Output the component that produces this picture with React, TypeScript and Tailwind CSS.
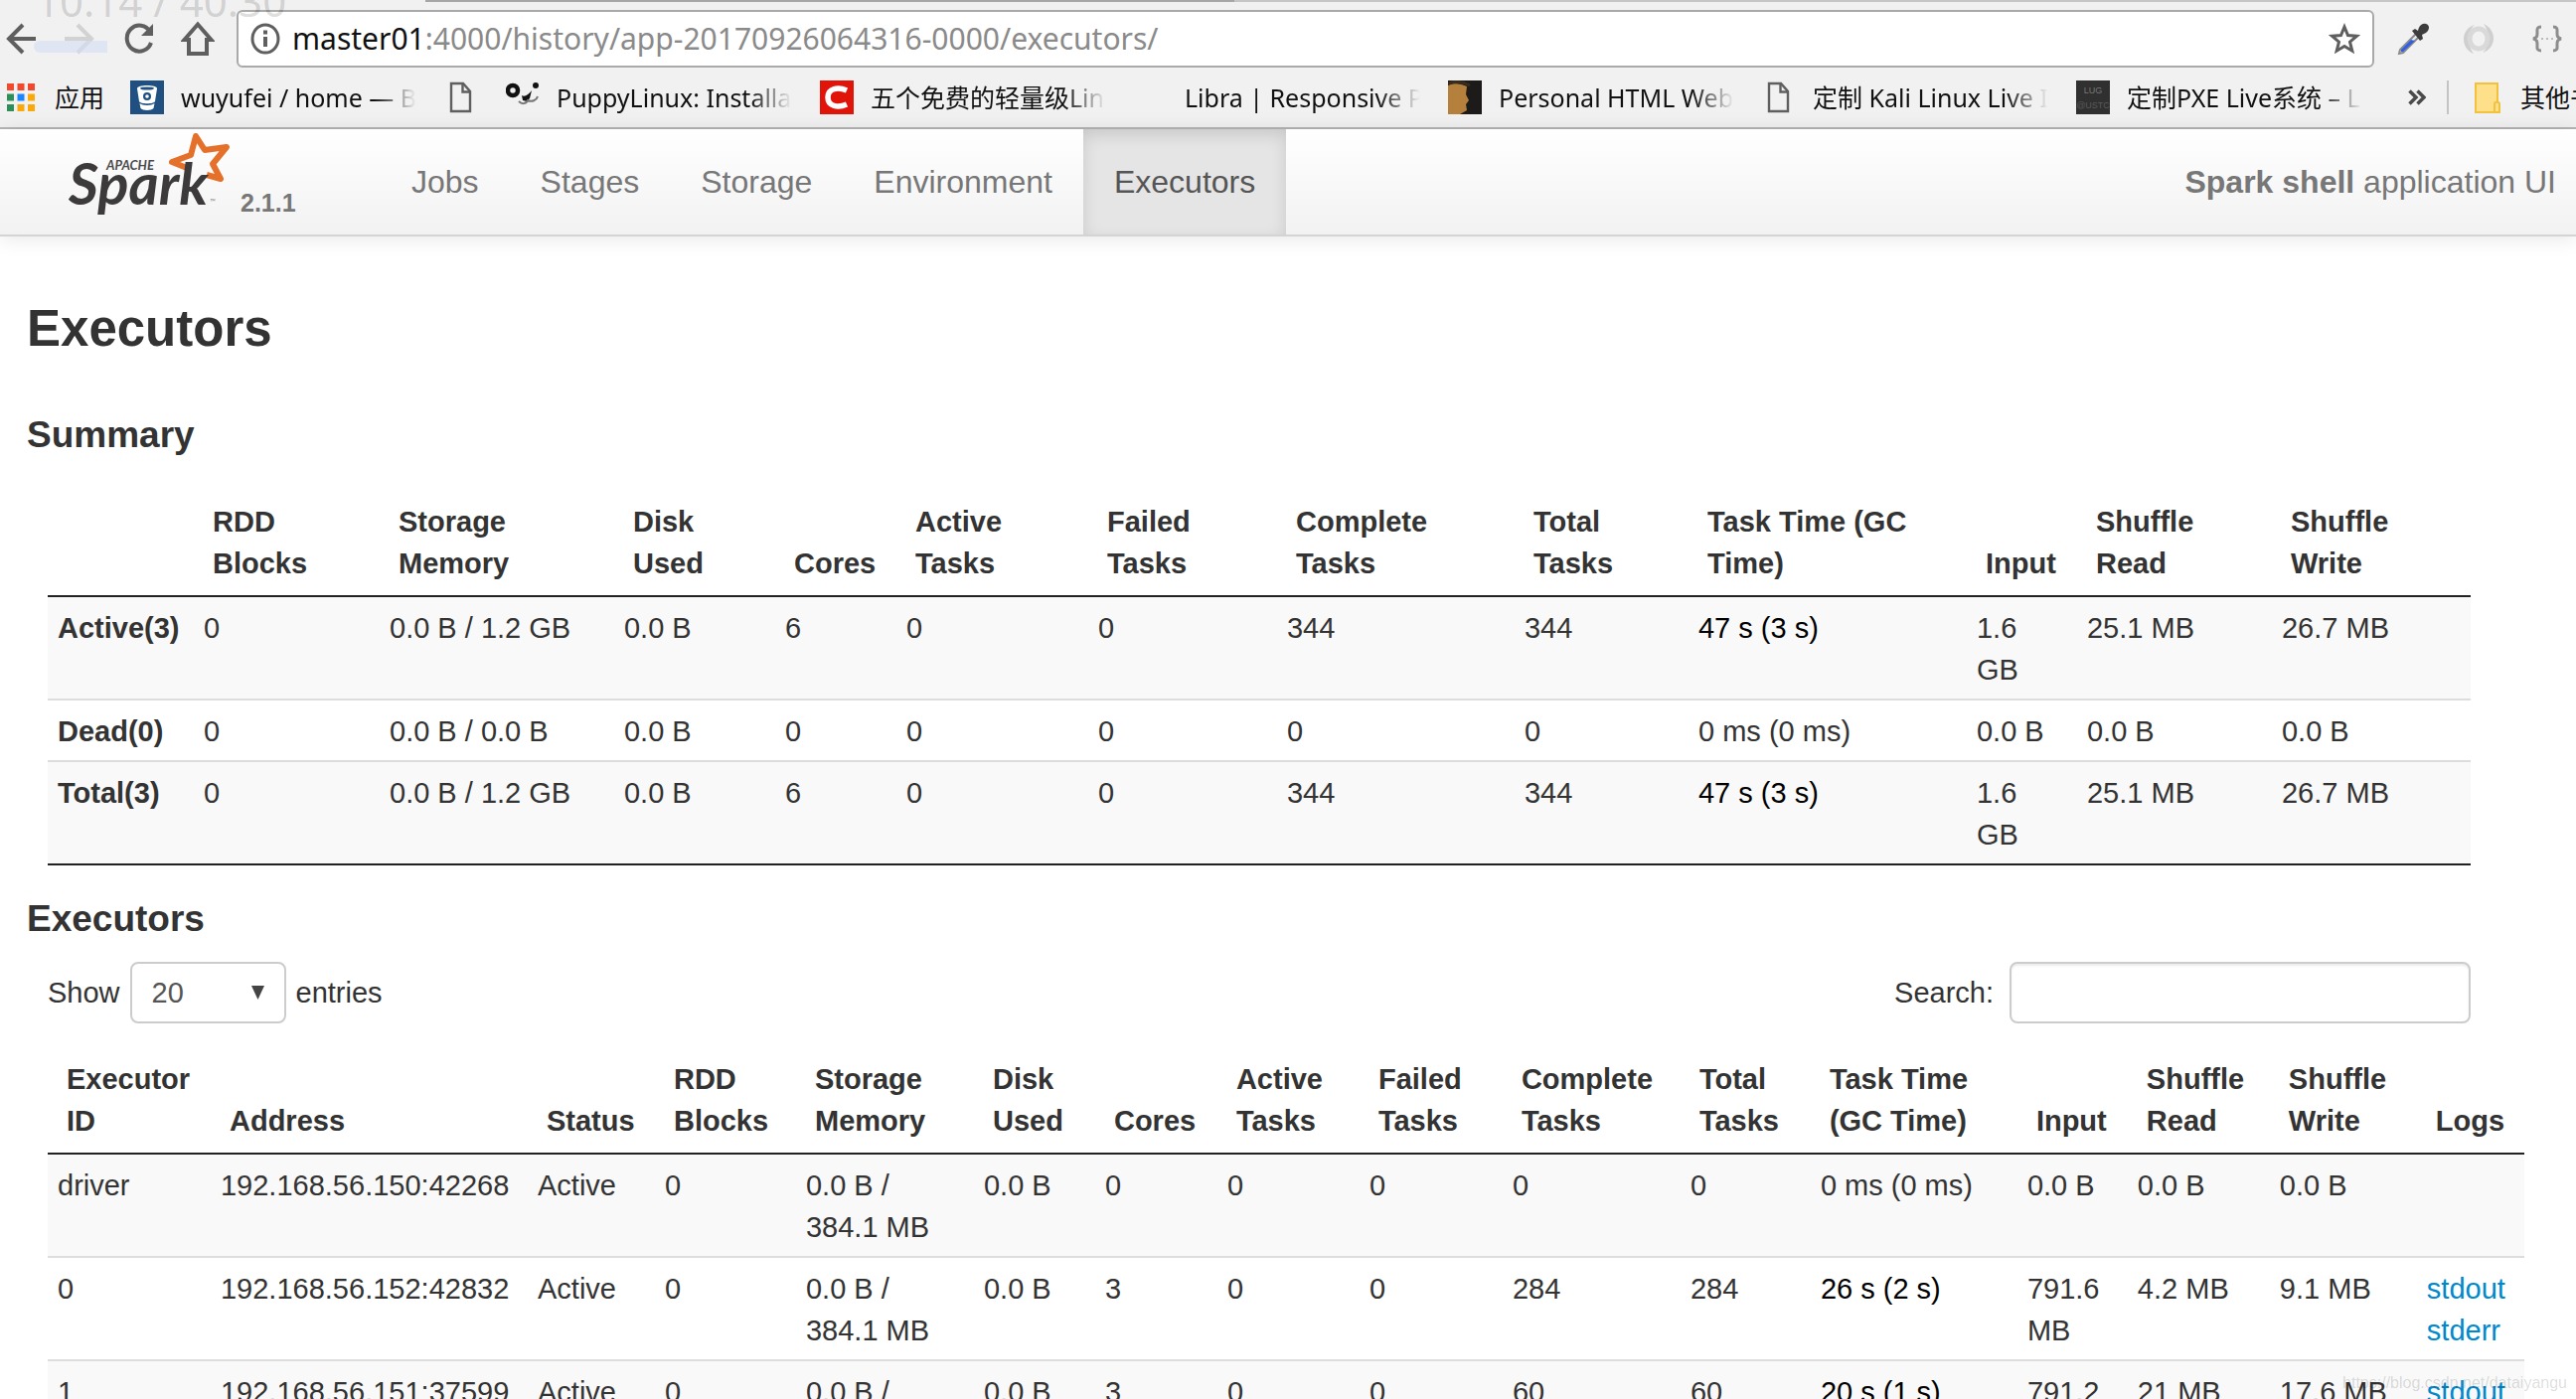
import React from 'react';

type Column = { label: string; width: number };
type Row = string[];

const summaryColumns: Column[] = [
  { label: '', width: 147 },
  { label: 'RDD\nBlocks', width: 187 },
  { label: 'Storage\nMemory', width: 236 },
  { label: 'Disk\nUsed', width: 162 },
  { label: 'Cores', width: 122 },
  { label: 'Active\nTasks', width: 193 },
  { label: 'Failed\nTasks', width: 190 },
  { label: 'Complete\nTasks', width: 239 },
  { label: 'Total\nTasks', width: 175 },
  { label: 'Task Time (GC\nTime)', width: 280 },
  { label: 'Input', width: 111 },
  { label: 'Shuffle\nRead', width: 196 },
  { label: 'Shuffle\nWrite', width: 200 },
];

const summaryRows: Row[] = [
  ['Active(3)', '0', '0.0 B / 1.2 GB', '0.0 B', '6', '0', '0', '344', '344', '47 s (3 s)', '1.6\nGB', '25.1 MB', '26.7 MB'],
  ['Dead(0)', '0', '0.0 B / 0.0 B', '0.0 B', '0', '0', '0', '0', '0', '0 ms (0 ms)', '0.0 B', '0.0 B', '0.0 B'],
  ['Total(3)', '0', '0.0 B / 1.2 GB', '0.0 B', '6', '0', '0', '344', '344', '47 s (3 s)', '1.6\nGB', '25.1 MB', '26.7 MB'],
];

const executorColumns: Column[] = [
  { label: 'Executor\nID', width: 164 },
  { label: 'Address', width: 319 },
  { label: 'Status', width: 128 },
  { label: 'RDD\nBlocks', width: 142 },
  { label: 'Storage\nMemory', width: 179 },
  { label: 'Disk\nUsed', width: 122 },
  { label: 'Cores', width: 123 },
  { label: 'Active\nTasks', width: 143 },
  { label: 'Failed\nTasks', width: 144 },
  { label: 'Complete\nTasks', width: 179 },
  { label: 'Total\nTasks', width: 131 },
  { label: 'Task Time\n(GC Time)', width: 208 },
  { label: 'Input', width: 111 },
  { label: 'Shuffle\nRead', width: 143 },
  { label: 'Shuffle\nWrite', width: 148 },
  { label: 'Logs', width: 108 },
];

const executorRows: Row[] = [
  ['driver', '192.168.56.150:42268', 'Active', '0', '0.0 B /\n384.1 MB', '0.0 B', '0', '0', '0', '0', '0', '0 ms (0 ms)', '0.0 B', '0.0 B', '0.0 B', ''],
  ['0', '192.168.56.152:42832', 'Active', '0', '0.0 B /\n384.1 MB', '0.0 B', '3', '0', '0', '284', '284', '26 s (2 s)', '791.6\nMB', '4.2 MB', '9.1 MB', 'logs'],
  ['1', '192.168.56.151:37599', 'Active', '0', '0.0 B /\n384.1 MB', '0.0 B', '3', '0', '0', '60', '60', '20 s (1 s)', '791.2\nMB', '21 MB', '17.6 MB', 'logs'],
];

const navItems = ['Jobs', 'Stages', 'Storage', 'Environment', 'Executors'];

const PageIcon = () => (
  <svg width="34" height="34" viewBox="0 0 34 34" fill="none" stroke="#5f5f5f" strokeWidth="2.4">
    <path d="M7 3h12l7 8v20H7z" />
    <path d="M18.500 3v8.500H26" />
  </svg>
);

const BitbucketIcon = () => (
  <svg width="34" height="34" viewBox="0 0 34 34">
    <rect width="34" height="34" fill="#205081" />
    <path d="M7 8c0-4 20-4 20 0l-2 13c-1 3-15 3-16 0z" fill="#fff" />
    <ellipse cx="17" cy="8" rx="7" ry="1.600" fill="#205081" />
    <circle cx="17" cy="16" r="4" fill="#205081" />
    <circle cx="17" cy="16" r="1.800" fill="#fff" />
    <path d="M9.500 23c3 2.500 12 2.500 15 0l-1 5c-2 2.500-11 2.500-13 0z" fill="#fff" />
  </svg>
);

const PuppyIcon = () => (
  <svg width="34" height="34" viewBox="0 0 34 34">
    <circle cx="7" cy="10" r="5" fill="none" stroke="#111" strokeWidth="4.500" />
    <circle cx="30" cy="5" r="3" fill="#111" />
    <path d="M16 15c3 2 7-1 10-5l-2 8-3 3-4-1z" fill="#111" />
    <path d="M13 21c3 3 7 3 9-1 4 2 9 0 10-4" fill="none" stroke="#777" strokeWidth="2" />
  </svg>
);

const RedCIcon = () => (
  <svg width="34" height="34" viewBox="0 0 34 34">
    <rect width="34" height="34" fill="#e1140a" />
    <path d="M27 10c-9-4-19-2-19 7s10 11 19 7" fill="none" stroke="#fff" strokeWidth="5.500" />
  </svg>
);

const PortraitIcon = () => (
  <svg width="34" height="34" viewBox="0 0 34 34">
    <rect width="34" height="34" fill="#1c1b1a" />
    <path d="M0 5c6-3 13-2 19 1l-1 8 3 6-3 4 1 6-7 4H0z" fill="#b5803c" />
    <path d="M0 3c8-3 16-1 22 2" fill="none" stroke="#3a2c1c" strokeWidth="3" />
  </svg>
);

const LugIcon = () => (
  <svg width="34" height="34" viewBox="0 0 34 34" fontFamily="Liberation Sans" fontSize="9" textAnchor="middle" fill="#777">
    <rect width="34" height="34" fill="#303030" />
    <text x="17" y="13">LUG</text>
    <text x="17" y="28" fill="#595959">@USTC</text>
  </svg>
);

const FolderIcon = () => (
  <svg width="28" height="34" viewBox="0 0 28 34" fill="#ffe08a" stroke="#f2c13e" strokeWidth="2">
    <path d="M2 3h22v29H2z" />
    <path d="M21 24c0-3 5-3 5 0v8h-5z" />
  </svg>
);

const AppsIcon = () => (
  <svg width="28" height="28" viewBox="0 0 28 28">
    <path d="M0 0h7v7H0zM10.500 0h7v7h-7zM21 0h7v7h-7z" fill="#f4482e" />
    <path d="M0 10.500h7v7H0zM0 21h7v7H0z" fill="#2b8f57" />
    <path d="M10.500 10.500h7v7h-7z" fill="#1a85ff" />
    <path d="M21 10.500h7v7h-7zM10.500 21h7v7h-7zM21 21h7v7h-7z" fill="#fba90a" />
  </svg>
);

const bookmarks: { label: string; icon: React.ReactNode }[] = [
  { label: 'wuyufei / home — Bitbucket', icon: <BitbucketIcon /> },
  { label: '', icon: <PageIcon /> },
  { label: 'PuppyLinux: Installation', icon: <PuppyIcon /> },
  { label: '五个免费的轻量级Linux', icon: <RedCIcon /> },
  { label: 'Libra | Responsive Portfolio', icon: null },
  { label: 'Personal HTML Website', icon: <PortraitIcon /> },
  { label: '定制 Kali Linux Live ISO', icon: <PageIcon /> },
  { label: '定制PXE Live系统 – LUG', icon: <LugIcon /> },
];

const Toolbar = () => (
  <div className="flex items-center pt-2 pl-[6px] pr-[14px] text-[#5f5f5f]">
    <button aria-label="Back" className="mr-[29px]">
      <svg width="30" height="32" viewBox="0 0 30 32" fill="none" stroke="currentColor" strokeWidth="4">
        <path d="M30 16H3M17 2L3 16l14 14" />
      </svg>
    </button>
    <button aria-label="Forward" className="mr-[29px] text-[#d2d2d2]">
      <svg width="30" height="32" viewBox="0 0 30 32" fill="none" stroke="currentColor" strokeWidth="4">
        <path d="M0 16h27M13 2l14 14-14 14" />
      </svg>
    </button>
    <button aria-label="Reload" className="mr-[26px]">
      <svg width="32" height="32" viewBox="0 0 32 32" fill="none" stroke="currentColor" strokeWidth="4">
        <path d="M27 9A12.500 13 0 1 0 28 20" />
        <path d="M30 1v12H18z" fill="currentColor" stroke="none" />
      </svg>
    </button>
    <button aria-label="Home" className="mr-[22px]">
      <svg width="34" height="36" viewBox="0 0 34 36" fill="none" stroke="currentColor" strokeWidth="4">
        <path d="M17 3.500L3.500 19H8v14h18V19h4.500z" />
      </svg>
    </button>

    <div className="flex h-[58px] flex-1 items-center rounded-md border-2 border-[#a9a9a9] bg-white pr-[12px] pl-[12px]">
      <svg className="mr-[12px]" width="30" height="32" viewBox="0 0 30 32" fill="none" stroke="currentColor" strokeWidth="3">
        <ellipse cx="15" cy="16" rx="13" ry="14" />
        <path d="M15 14v10M15 7.500v4" strokeWidth="4" />
      </svg>
      <div className="flex-1 font-['Noto_Sans','Noto_Sans_CJK_SC',sans-serif] text-[30px] leading-[42px] text-[#8a8a8a]">
        <span className="text-[#111]">master01</span>:4000/history/app-20170926064316-0000/executors/
      </div>
      <button aria-label="Bookmark this page">
        <svg width="32" height="32" viewBox="0 0 32 32" fill="none" stroke="currentColor" strokeWidth="3">
          <path d="M16 4l3.500 8.500 9 .7-7 6 2.300 9L16 23.500 8.200 28.200l2.300-9-7-6 9-.7z" />
        </svg>
      </button>
    </div>

    <button aria-label="Color picker" className="ml-[22px]">
      <svg width="34" height="34" viewBox="0 0 34 34">
        <path d="M20 12L4 28l-1 4 4-1 16-16" fill="#e8ecf5" stroke="#8a8a8a" strokeWidth="2" />
        <path d="M15 18L5 28v2h2l12-11z" fill="#2f5fe0" />
        <path d="M16 9l3-2 3 2c1-5 4-8 8-7 4 1 4 6 0 9l-4 2 1 4-3 2z" fill="#3d3d3d" />
      </svg>
    </button>
    <button aria-label="Extension" className="ml-[32px]">
      <svg width="34" height="34" viewBox="0 0 34 34" fill="none">
        <path d="M22 2C36 8 35 27 21 31c7-6 8-20 1-29z" fill="#cfcfcf" />
        <path d="M12 32C-2 26-1 7 13 3c-7 6-8 20-1 29z" fill="#cfcfcf" />
        <ellipse cx="17" cy="17" rx="9" ry="10" stroke="#d9d9d9" strokeWidth="5" />
      </svg>
    </button>
    <button aria-label="JSON viewer" className="ml-[37px]">
      <svg width="30" height="28" viewBox="0 0 30 28" fill="none" stroke="#8d8d8d" strokeWidth="3">
        <path d="M9 2C4 2 5 5 5 8s0 5-4 6c4 1 4 3 4 6s-1 6 4 6M21 2c5 0 4 3 4 6s0 5 4 6c-4 1-4 3-4 6s1 6-4 6" />
        <path d="M9 14h2M14 14h2M19 14h2" stroke="#bbb" strokeWidth="2" />
      </svg>
    </button>
  </div>
);

const BookmarksBar = () => (
  <div className="flex h-[60px] items-center overflow-hidden pl-[7px] font-['Noto_Sans','Noto_Sans_CJK_SC',sans-serif] text-[25px] leading-9 whitespace-nowrap text-[#111]">
    <a href="#apps" className="mr-[26px] flex shrink-0 items-center gap-5">
      <AppsIcon />
      <span>应用</span>
    </a>
    <div className="flex shrink-0 gap-[28px]">
      {bookmarks.map((bookmark, i) => (
        <a key={i} href="#bookmark" className="flex items-center gap-[17px]">
          <span className="h-[34px] w-[34px]">{bookmark.icon}</span>
          {bookmark.label && (
            <span className="w-[237px] overflow-hidden [mask-image:linear-gradient(to_right,black_82%,transparent)]">
              {bookmark.label}
            </span>
          )}
        </a>
      ))}
    </div>
    <button aria-label="More bookmarks" className="ml-[46px] shrink-0">
      <svg width="18" height="16" viewBox="0 0 18 16" fill="none" stroke="#4a4a4a" strokeWidth="3.500">
        <path d="M1.500 1.500L8 8l-6.500 6.500M9.500 1.500L16 8l-6.500 6.500" />
      </svg>
    </button>
    <div className="ml-[21px] h-[34px] w-[2px] shrink-0 bg-[#c4c4c4]" />
    <a href="#other" className="ml-[25px] flex shrink-0 items-center gap-[19px]">
      <FolderIcon />
      <span>其他书签</span>
    </a>
  </div>
);

const SparkLogo = () => (
  <svg width="180" height="86" viewBox="0 5 180 86" fontFamily="Lato" fontStyle="italic">
    <path
      d="M128 44L113 38l19-7 5-19 9 14 22-3-14 17 8 15-14-4"
      fill="none"
      stroke="#e5702a"
      strokeWidth="6"
      strokeLinejoin="round"
    />
    <text x="47" y="46" fontSize="13" fontWeight="700" fill="#4a4a4a">APACHE</text>
    <text x="9" y="81" fontSize="58" fontWeight="700" fill="#3c3a3b">Spark</text>
    <text x="151" y="81" fontSize="8" fill="#888">™</text>
  </svg>
);

const Navbar = () => (
  <nav className="flex h-[108px] border-b-2 border-[#d4d4d4] bg-linear-to-b from-white to-[#f2f2f2] pl-[60px] text-[32px] text-[#777] shadow-[0_2px_20px_rgba(0,0,0,0.1)]">
    <a href="#home" className="flex w-[323px] shrink-0 items-end gap-[2px] pb-5">
      <SparkLogo />
      <span className="text-[25px] leading-6 font-bold">2.1.1</span>
    </a>
    {navItems.map((item) => (
      <a
        key={item}
        href={`#${item.toLowerCase()}`}
        className={`flex items-center px-[31px] ${
          item === 'Executors' ? 'bg-[#e5e5e5] text-[#555] shadow-[inset_0_6px_16px_rgba(0,0,0,0.125)]' : ''
        }`}
      >
        {item}
      </a>
    ))}
    <p className="ml-auto flex items-center pr-[20px] whitespace-pre">
      <strong>Spark shell</strong> application UI
    </p>
  </nav>
);

interface DataTableProps {
  columns: Column[];
  rows: Row[];
  boldFirst?: boolean;
  closed?: boolean;
}

const DataTable: React.FC<DataTableProps> = ({ columns, rows, boldFirst = false, closed = false }) => {
  const total = columns.reduce((sum, column) => sum + column.width, 0);

  return (
    <table className="w-full table-fixed border-separate border-spacing-0 text-left whitespace-pre">
      <colgroup>
        {columns.map((column, i) => (
          <col key={i} style={{ width: `${(column.width / total) * 100}%` }} />
        ))}
      </colgroup>
      <thead>
        <tr>
          {columns.map((column, i) => (
            <th key={i} className="border-b-2 border-[#222] pt-2 pb-[11px] pl-[19px] align-bottom font-bold">
              {column.label}
            </th>
          ))}
        </tr>
      </thead>
      <tbody>
        {rows.map((row, r) => (
          <tr key={r} className="odd:bg-[#f9f9f9]">
            {row.map((cell, c) => {
              const border = closed && r === rows.length - 1 ? 'border-[#222]' : 'border-[#ddd]';
              const weight = boldFirst && c === 0 ? 'font-bold' : '';
              const color = / s \(/.test(cell) ? 'text-black' : '';
              return (
                <td key={c} className={`border-b-2 pt-[10px] pb-2 pl-[10px] align-top ${border} ${weight} ${color}`}>
                  {cell === 'logs' ? (
                    <div className="flex flex-col items-start text-[#0088cc]">
                      <a href="#stdout">stdout</a>
                      <a href="#stderr">stderr</a>
                    </div>
                  ) : (
                    cell
                  )}
                </td>
              );
            })}
          </tr>
        ))}
      </tbody>
    </table>
  );
};

export default function App() {
  return (
    <div className="relative h-screen overflow-hidden bg-white font-['Liberation_Sans','Noto_Sans_CJK_SC',sans-serif] text-[29px] leading-[42px] text-[#333]">
      {/* Browser chrome */}
      <header className="border-b-2 border-[#b4b4b4] bg-[#f1f1f1]">
        <div className="flex h-[2px] pl-[428px]">
          <div className="w-[814px] bg-[#a6a6a6]" />
          <div className="flex-1 bg-[#c6c6c6]" />
        </div>
        <Toolbar />
        <BookmarksBar />
      </header>

      <Navbar />

      <main className="pt-[51px] pl-[27px]">
        <h3 className="text-[51px] leading-[84px] font-bold">Executors</h3>
        <h4 className="mt-[44px] text-[37px] font-bold">Summary</h4>
        <div className="mt-[37px] pr-[106px] pl-[21px]">
          <DataTable columns={summaryColumns} rows={summaryRows} boldFirst closed />
        </div>

        <h4 className="mt-[33px] text-[37px] font-bold">Executors</h4>
        <div className="mt-[22px] flex items-center justify-between pr-[106px] pl-[21px]">
          <label className="flex items-center gap-[10px]">
            Show
            <span className="relative">
              <select
                defaultValue="20"
                className="block h-[62px] w-[157px] appearance-none rounded-lg border-2 border-[#ccc] bg-white pl-5 text-[#555]"
              >
                <option>20</option>
                <option>40</option>
                <option>60</option>
                <option>100</option>
                <option>All</option>
              </select>
              <svg className="pointer-events-none absolute top-6 right-[22px]" width="13" height="14" viewBox="0 0 13 14">
                <path d="M0 0h13L6.500 14z" fill="#444" />
              </svg>
            </span>
            entries
          </label>
          <label className="flex items-center gap-4">
            Search:
            <input
              type="search"
              className="h-[62px] w-[464px] rounded-lg border-2 border-[#ccc] bg-white px-4 shadow-[inset_0_2px_2px_rgba(0,0,0,0.075)]"
            />
          </label>
        </div>
        <div className="mt-[27px] pr-[52px] pl-[21px]">
          <DataTable columns={executorColumns} rows={executorRows} />
        </div>
      </main>

      {/* Player time and progress laid over the toolbar */}
      <div className="pointer-events-none absolute -top-[27px] left-[36px] font-['Noto_Sans',sans-serif] text-[42px] leading-[56px] whitespace-nowrap text-black/15">
        10:14 / 40:30
      </div>
      <div className="pointer-events-none absolute top-[41px] left-[34px] h-[12px] w-[74px] rounded-l-md bg-[#d3def5]/60" />

      <div className="pointer-events-none absolute right-[9px] bottom-1 text-[16px] leading-6 text-black/15">
        https://blog.csdn.net/dataiyangu
      </div>
    </div>
  );
}
